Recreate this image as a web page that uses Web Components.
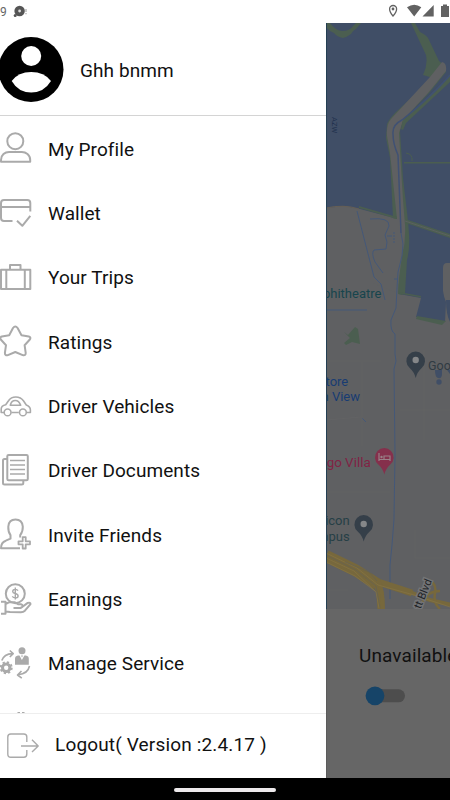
<!DOCTYPE html>
<html lang="en"><head><meta charset="utf-8"><title>Driver menu</title>
<style>body{margin:0;background:#000;font-family:Roboto,sans-serif;overflow:hidden}</style></head>
<body><driver-app></driver-app>
<script>
const define=(name,html)=>customElements.define(name,class extends HTMLElement{
  constructor(){super();this.attachShadow({mode:'open'}).innerHTML=html;}
});
const icons={
profile:'<circle cx="15.3" cy="12.2" r="8"/><path d="M1 32.7v-1.8c0-5 4-8 8-8h12.8c4 0 8.400 3 8.400 8v1.8z"/>',
wallet:'<path d="M12.500 27H4q-3 0-3-3V9q0-3 3-3h23.300q3 0 3 3v8.500M1 13h29.300M17 26.800l5.300 5 8-10"/>',
trips:'<path d="M1 11.700h29.300V31H1zM6.300 11.700V31M24.800 11.700V31M10 11.700V7h10.500v4.700"/>',
star:'<path d="M13 6q2.300-3 4.600 0l3.900 7.300 7.300 1.200q2.700.8.800 3.300l-5 5.400 1.100 7.700q0 3.200-3 2.200L15.300 30l-7.400 3.100q-3 .8-3-2.200L6 23.200l-5-5.400q-1.800-2.500.9-3.300l7.300-1.200z"/>',
car:'<g stroke-width="1.6"><path d="M4 25.500H1.200V22q0-3.300 4.500-4.200l3-4.300Q11 10 15.800 10q5 0 7.800 4l2.700 4q4 1.300 4.100 5v2.500h-3.700M11.500 25.500h7.300"/><circle cx="7.600" cy="25.400" r="3.400"/><circle cx="22.900" cy="25.400" r="3.400"/><path d="M10.300 18.300h10.400q-1.800-4.800-5.400-4.800-3.900 0-5 4.800z"/></g>',
docs:'<rect x="7.300" y="4" width="20.500" height="25.300" rx="1.300"/><path d="M7.300 8H4.500q-1.500 0-1.500 1.500V32q0 1.500 1.500 1.500h17.200q1.600 0 1.600-1.500v-2.700"/><path stroke-width="1.500" d="M10 9.500h15M10 14h15M10 18.600h15M10 23h15"/>',
invite:'<path d="M20 33.300H1q0-6 4.800-7.600l4.700-2v-3.500Q8 16.800 8.300 11.600q.5-7 7.200-7t7.300 7q.2 5-2.600 8.600v2.300" /><path d="M22.700 22.200h3v4.100h4.300v3h-4.300v4.200h-3v-4.200h-4.200v-3h4.200z" stroke-width="1.800"/>',
earn:'<circle cx="15.300" cy="13.700" r="9.500"/><path d="M18 10.700q-1-1.500-3-1.300-2.300.3-2.300 2 0 1.500 2.500 2.100 2.900.6 2.900 2.500 0 1.900-2.800 1.900-2 0-3-1.500M15.300 7.500v12" stroke-width="1.400"/><path d="M1 21.800h4.500v12H1M5.500 24l4-1.800h5l3.500 2h3q2.500.6 1 3l-1.500.8h-7M21.500 27.500l6.200-4.600q2.800-.8 2.800 1.200l-5.600 6.600q-1.500 1.500-4 1.600L10 32l-4.500-.6"/>',
manage:'<circle cx="6.200" cy="23.700" r="3.700" stroke-width="3"/><circle cx="6.200" cy="23.700" r="5.500" stroke-width="2" stroke-dasharray="2.200 2.120"/><circle cx="22" cy="6.700" r="3.500" class="f"/><path class="f" d="M15 20.700v-6q0-2.600 3-3.200h1.500l2.400 4.500 2.500-4.500h1.400q3 .6 3 3.200v6zM21 11.500h2l-1 2z"/><path d="M1.800 16.500Q4 10 12.500 9.600M9.800 6.500l3.400 3.100-3.400 3.400M29.500 22q-1.500 7.600-11.300 8.800M21.500 27l-4 4 4.300 3.200" stroke-width="1.600"/>',
exit:'<g stroke-width="1.400"><path d="M26.800 16V11q0-3-3-3h-13q-3 0-3 3v17q0 3.300 3 3.300h13q3 0 3-3.300v-4M21 20h17M32 13.800L38.200 20l-6.200 6"/></g>'
};
customElements.define('line-icon',class extends HTMLElement{
 connectedCallback(){const w=this.getAttribute('width')||34;
 this.attachShadow({mode:'open'}).innerHTML=`<style>:host{display:block;flex:none;width:${w}px;height:40px}svg{display:block;fill:none;stroke:#aaa;stroke-width:2;stroke-linejoin:round}.f{fill:#aaa;stroke:none}</style><svg width="${w}" height="40">${icons[this.getAttribute('name')]}</svg>`;}
});
customElements.define('menu-row',class extends HTMLElement{
 connectedCallback(){this.attachShadow({mode:'open'}).innerHTML=`<style>:host{display:flex;align-items:center;gap:14px;height:64.35px;flex:none;font-size:19px;line-height:24px;color:#111;white-space:nowrap;letter-spacing:var(--track,0)}span{padding-top:1px}</style><line-icon name="${this.getAttribute('icon')}"></line-icon><span><slot></slot></span>`;}
});
define('status-bar',`<style>:host{display:flex;height:23px;background:#fff;align-items:center;color:#666;font-size:12px;justify-content:space-between}.l{display:flex;align-items:center;gap:6px}svg{display:block}</style>
<div class="l"><span>9</span><svg width="16" height="16" fill="#555"><circle cx="6.600" cy="7" r="5.200"/><circle cx="6.600" cy="7" r="1.400" fill="#ddd"/><circle cx="2.200" cy="11.500" r="1.500"/><path d="M12.400 5h1.200v3h-1.200zM12.400 9h1.200v1.200h-1.200z" fill="#aaa"/></svg></div>
<svg width="64" height="23" fill="#626262"><path d="M7 16Q3.600 12 3.600 9a3.500 3.500 0 0 1 7 0Q10.600 12 7 16z" fill="none" stroke="#626262" stroke-width="1.300"/><circle cx="7" cy="9" r="1.400"/><path d="M21 7.300q7.300-5 14.300 0L28.200 16.500zM36.500 16.500h11.200V5zM55 6h2V4.500h4V6h2v11h-8z"/></svg>`);
define('profile-header',`<style>:host{display:flex;box-sizing:border-box;height:93px;align-items:center;gap:16px;border-bottom:1px solid #d4d4d4;font-size:19px;color:#111;letter-spacing:var(--track,0)}svg{flex:none}span{padding-top:2px}</style>
<svg width="64" height="66"><circle cx="31" cy="33.500" r="32.500"/><circle cx="31.200" cy="20" r="10" fill="#fff"/><path d="M11.700 45q6.500-9 19.500-9t19.800 9Q44 56.500 31.200 56.500T11.700 45z" fill="#fff"/></svg><span><slot></slot></span>`);
define('logout-bar',`<style>:host{display:flex;flex:none;box-sizing:border-box;height:65px;align-items:center;border-top:1px solid #eee;gap:15px;font-size:19px;color:#111;background:#fff;white-space:pre;letter-spacing:.16px}span{padding-bottom:4px}</style><line-icon name="exit" width="40"></line-icon><span><slot></slot></span>`);
define('side-drawer',`<style>:host{display:flex;flex-direction:column;width:326px;height:755px;background:#fff;--track:.08px}nav{display:flex;flex-direction:column;height:597px;overflow:hidden;padding-top:1px;box-sizing:border-box}.peek{flex:none;width:26px;height:20px;padding-top:16px}</style>
<profile-header>Ghh bnmm</profile-header>
<nav><menu-row icon="profile">My Profile</menu-row><menu-row icon="wallet">Wallet</menu-row><menu-row icon="trips">Your Trips</menu-row><menu-row icon="star">Ratings</menu-row><menu-row icon="car">Driver Vehicles</menu-row><menu-row icon="docs">Driver Documents</menu-row><menu-row icon="invite">Invite Friends</menu-row><menu-row icon="earn">Earnings</menu-row><menu-row icon="manage">Manage Service</menu-row><svg class="peek" viewBox="0 0 26 20"><path d="M17.500 1h2.500M22 1h2.500" stroke="#aaa" stroke-width="2"/></svg></nav>
<logout-bar>Logout( Version :2.4.17 )</logout-bar>`);
define('map-view',`<style>:host{display:block;height:586px}svg{display:block;font-family:Roboto,sans-serif;font-size:13px}.g{fill:#4b5e50}.w{fill:#404e66}.b{stroke:#445879;fill:none;stroke-width:1}.y{stroke:#77683c;fill:none}.e{text-anchor:end}</style>
<svg width="124" height="586" viewBox="326 23 124 586"><path fill="#5f6062" d="M326 23h124v586H326z"/>
<path class="w" d="M326 23h124v240h-3q-4 0-4 5v23q1 7 3 11l-1 20-29-5 5-19-22-4 5-30V219h-6L360 209l-16-3-18 2z"/>
<path class="w" d="M446 300h4v22q-4-8-4-22z"/>
<path class="g" d="M326 23h4q5 7 12 8 8 0 11-5l3-3h5l-5 6q-4 2-5 5-4 3-8 4-6-1-9-5-5-2-8-6z"/>
<path class="g" d="M411 23h4l5 9q7 3 9 8l10 21q6 4 7 11l-16 20-26 27-4 12 3 47 5 43 1 13q1 15-2 26l-2 33-3 2-4-1 2-46-4-25-3-5L390 158l-4-20 1-14q2-5 9-12l37-34-10-3q5-10 3-20z"/>
<path d="M442 62q5 1 4 9l-18 22-25 27-4 13 1 18 3 49 2 25q1 16-3 31l-5 37-24-10V215l24 4-7-66-3-17q-1-11 4-17l39-42z" fill="#5f6062"/>
<path class="g" d="M451 75l-48 45-2 9 2 1 3-7 45-42zM359 208l38 11v-2l-38-11zM404 162h46v1.500h-46zM405 219l45 15v4l-44-15zM417 316l29 5-4 4-26-6zM399 292l22 4v1.500l-22-4zM344 332l4 3 7-8 3 2 2 15-8-2-6 3-2-2 6-5z"/>
<path d="M326 208q18-4 33 1" stroke="#665f55" fill="none"/>
<path d="M405 221l45 15" stroke="#5b6060" fill="none"/>
<path class="b" d="M406 153q7 1 6 8" style="stroke:#4b5e50"/>
<path stroke="#405174" stroke-width="1.500" fill="none" d="M450 75q-17 20-48 45-10 5-9 14 0 10 5 21l3 78"/>
<path class="b" d="M401 233l2 11-1 12-4 16-1 16-1 20-5 12q-1 11 4 14v20l1 7-2 8 1 85-1 65-2 26-2 20 0 34M357 211l17 66 7 7 4 16M370 219q20-2 19 7l-4 9 2 7-1 7-12 1q-3 3 1 12l8 11M387 236h5M326 310h41M362 418l4 4M394 279h3"/><path class="b" stroke-dasharray="2 1" d="M394 232v12"/>
<path stroke="#646567" stroke-width=".6" fill="none" d="M326 361h55M362 362v84M326 420l35-3M400 410h50M424 350v90M326 492h64M415 530v28h35M326 590h22"/>
<path class="w" d="M435 370h7v4q0 5-4 4-3-1-3-8zM447 370h3v4z"/><circle class="w" cx="439" cy="382" r="2.700"/>
<g class="y"><path stroke-width="12" d="M326 556l29 14 22 14"/><path stroke-width="7" d="M355 569q22 9 25 24l1 17M375 581l37 12"/><path stroke-width="4" d="M410 592l20 8 22 5M378 580q5 10 5 30"/><path stroke-width="2.500" d="M427 580q10 2 8 13-2 10 5 16M440 591q-13 0-18 12l-3 9"/><path stroke="#857445" stroke-width=".7" d="M326 553l31 15 21 17 36 10 36 12M326 558l28 13 22 21 3 16M326 562l29 14 20 15"/><path stroke="#626158" stroke-width=".6" d="M326 555l30 15 20 16 4 22M345 562l24 10 8 9"/></g>
<text x="323" y="298" fill="#17454d">phitheatre</text>
<g fill="#183c72"><text x="325.500" y="385.500">tore</text><text class="e" x="360" y="401">n View</text></g>
<text class="e" x="370.700" y="466.500" fill="#812345" style="font-size:13.400px">ngo Villa</text>
<g fill="#263f46"><text class="e" x="349.700" y="525">icon</text><text class="e" x="349.700" y="541">npus</text></g><text x="428" y="369.500" fill="#303b43" style="font-size:12.500px">Google</text>
<g fill="#353f49"><path d="M415.700 378q-1.500-6-6-10a9.300 9.300 0 1 1 12 0q-4.500 4-6 10z"/><path d="M363.700 541.500q-1.500-6-6-10a9.300 9.300 0 1 1 12 0q-4.500 4-6 10z"/></g><g fill="#858789"><circle cx="415.700" cy="360" r="3.200"/><circle cx="363.700" cy="524" r="3.200"/></g>
<path fill="#85304c" d="M384.300 474.500q-1.500-6-6-10a9.300 9.300 0 1 1 12 0q-4.500 4-6 10z"/><path d="M379 453v8M379 459.500h11M390 461v-5h-6v3" stroke="#998087" stroke-width="1.200" fill="none"/><circle cx="381.500" cy="457" r="1.200" fill="#998087"/>
<text transform="translate(332 117) rotate(90)" style="font-size:7.500px" fill="#22324e">AZW</text>
<text transform="translate(420.500 609.500) rotate(-68)" style="font-size:11px;stroke:#737476;stroke-width:3;paint-order:stroke" fill="#222529">tt Blvd</text>
<path d="M326.500 23v586" stroke="#243f53"/></svg>`);
define('availability-panel',`<style>:host{display:flex;flex-direction:column;align-items:flex-start;box-sizing:border-box;height:169px;background:#666;padding:34px 0 0 32px;overflow:hidden;border-left:1px solid #5b5b5b}span{font-size:19px;line-height:26px;color:#111;letter-spacing:.1px}svg{display:block;margin:16px 0 0 5px}</style><span><slot></slot></span><svg width="42" height="22"><rect x="3" y="4.300" width="38" height="13" rx="6.500" fill="#4d4d4d"/><circle cx="11" cy="10.800" r="9.400" fill="#164468"/></svg>`);
define('nav-pill',`<style>:host{display:flex;height:22px;background:#000;justify-content:center;align-items:center;padding-top:2px;box-sizing:border-box}i{width:102px;height:4px;border-radius:2px;background:#ece9eb}</style><i></i>`);
define('driver-app',`<style>:host{display:grid;grid-template-rows:23px 755px 22px;width:450px;height:800px;overflow:hidden}main{display:grid;grid-template-columns:326px 124px;overflow:hidden}section{min-width:0;overflow:hidden}</style><status-bar></status-bar><main><side-drawer></side-drawer><section><map-view></map-view><availability-panel>Unavailable</availability-panel></section></main><nav-pill></nav-pill>`);
</script></body></html>
